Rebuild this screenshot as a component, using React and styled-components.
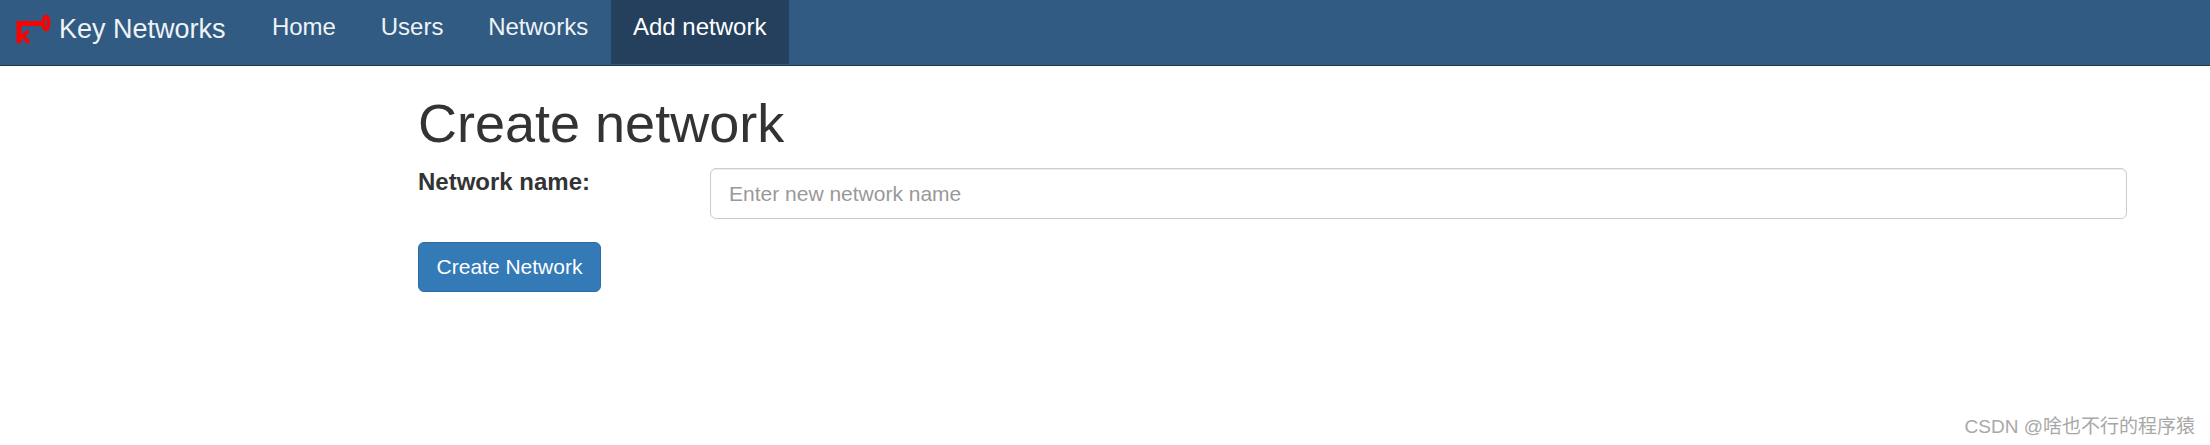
import React from 'react';
import styled, { createGlobalStyle } from 'styled-components';

const GlobalStyle = createGlobalStyle`
  html, body {
    margin: 0;
    padding: 0;
    background: #fff;
  }
  body {
    font-family: "Liberation Sans", Arial, sans-serif;
    color: #333;
  }
`;

const Page = styled.div`
  position: relative;
  height: 445px;
  overflow: hidden;
`;

const Navbar = styled.nav`
  display: flex;
  align-items: flex-start;
  height: 65px;
  background: #315b82;
  border-bottom: 1px solid #22384f;
`;

const Brand = styled.a`
  display: flex;
  align-items: flex-start;
  width: 249.5px;
  padding-left: 16px;
  box-sizing: border-box;
  color: #eef3f7;
  font-size: 27px;
  line-height: 59px;
`;

const BrandIcon = styled.svg`
  width: 36px;
  height: 36px;
  margin: 11px 7px 0 0;
  flex: none;
`;

const NavLink = styled.a`
  display: block;
  height: 64px;
  padding: 0 22.4px;
  font-size: 24px;
  line-height: 54px;
  color: ${(p) => (p.$active ? '#fff' : '#eef3f7')};
  background: ${(p) => (p.$active ? '#24405d' : 'transparent')};
`;

const Main = styled.main`
  padding: 0 83px 0 418px;
`;

const Title = styled.h1`
  margin: 0;
  padding-top: 22px;
  height: 75px;
  font-size: 54px;
  font-weight: 400;
  line-height: 70px;
  color: #333;
`;

const FormRow = styled.div`
  display: flex;
  align-items: flex-start;
  margin-top: 5px;
`;

const FieldLabel = styled.label`
  width: 292px;
  flex: none;
  font-size: 24px;
  font-weight: 700;
  line-height: 28px;
  color: #333;
`;

const TextInput = styled.input`
  flex: 1;
  min-width: 0;
  height: 51px;
  box-sizing: border-box;
  padding: 0 18px;
  border: 1px solid #ccc;
  border-radius: 6px;
  box-shadow: inset 0 1px 1px rgba(0, 0, 0, 0.075);
  font-family: inherit;
  font-size: 21px;
  color: #555;
  &::placeholder {
    color: #999;
    opacity: 1;
  }
`;

const PrimaryButton = styled.button`
  display: block;
  width: 183px;
  height: 50px;
  margin-top: 23px;
  padding: 0;
  background: #337ab7;
  border: 1px solid #2e6da4;
  border-radius: 6px;
  font-family: inherit;
  font-size: 21px;
  color: #fff;
`;

const Watermark = styled.div`
  position: absolute;
  right: 15px;
  bottom: 7px;
  font-family: "Liberation Sans", "Noto Sans CJK SC", sans-serif;
  font-size: 19px;
  line-height: 22px;
  color: #a8a8a8;
`;

const KeyIcon = () => (
  <BrandIcon viewBox="0 0 36 36" fill="none" stroke="#f00" strokeWidth="3.5">
    <path d="M3 32V12.5H28" strokeWidth="5" />
    <ellipse cx="30" cy="12" rx="2.6" ry="6.5" strokeWidth="3.4" />
    <path d="M4 27L12.5 20M7 25L13 32" />
  </BrandIcon>
);

const links = ['Home', 'Users', 'Networks', 'Add network'];

export default function App() {
  return (
    <Page>
      <GlobalStyle />
      <Navbar>
        <Brand>
          <KeyIcon />
          Key Networks
        </Brand>
        {links.map((name) => (
          <NavLink key={name} $active={name === 'Add network'}>
            {name}
          </NavLink>
        ))}
      </Navbar>
      <Main>
        <Title>Create network</Title>
        <FormRow>
          <FieldLabel>Network name:</FieldLabel>
          <TextInput placeholder="Enter new network name" />
        </FormRow>
        <PrimaryButton>Create Network</PrimaryButton>
      </Main>
      <Watermark>CSDN @啥也不行的程序猿</Watermark>
    </Page>
  );
}
